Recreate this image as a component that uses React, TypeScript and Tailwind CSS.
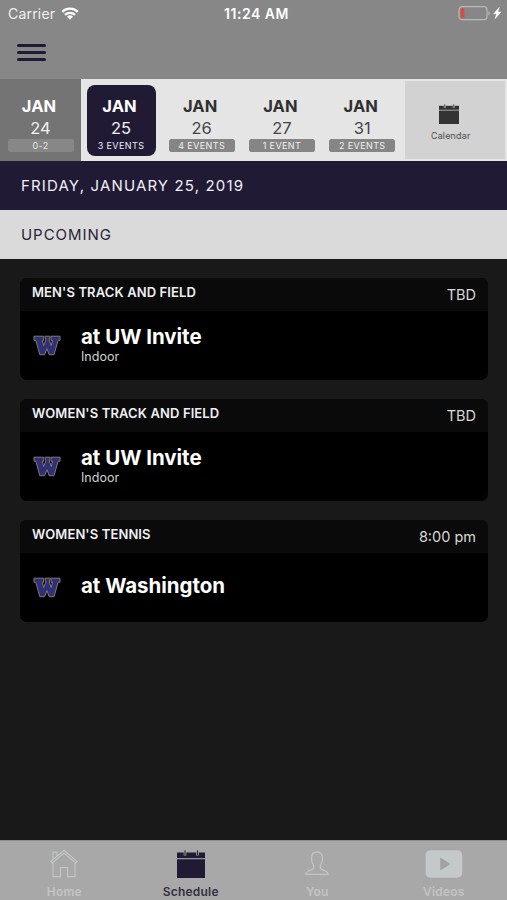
import React from 'react';

type Day = { month: string; day: string; label: string; state: 'past' | 'active' | 'next' };

const days: Day[] = [
  { month: 'JAN', day: '24', label: '0-2', state: 'past' },
  { month: 'JAN', day: '25', label: '3 EVENTS', state: 'active' },
  { month: 'JAN', day: '26', label: '4 EVENTS', state: 'next' },
  { month: 'JAN', day: '27', label: '1 EVENT', state: 'next' },
  { month: 'JAN', day: '31', label: '2 EVENTS', state: 'next' },
];

const events = [
  { sport: "MEN'S TRACK AND FIELD", time: 'TBD', title: 'at UW Invite', note: 'Indoor' },
  { sport: "WOMEN'S TRACK AND FIELD", time: 'TBD', title: 'at UW Invite', note: 'Indoor' },
  { sport: "WOMEN'S TENNIS", time: '8:00 pm', title: 'at Washington', note: '' },
];

function StatusBar() {
  return (
    <div className="grid h-7 grid-cols-3 items-center pl-2 pr-[5px] text-white">
      <div className="flex items-center gap-[6px]">
        <span className="text-[14px] leading-7 tracking-[0.2px] text-[#f0f0f0]">Carrier</span>
        <svg width="18" height="13" viewBox="0 0 18 13" fill="none" stroke="#fff" strokeWidth="2.3" className="-mt-0.5">
          <path d="M1.2 4.8a11.2 11.2 0 0 1 15.6 0" />
          <path d="M4 7.9a7.2 7.2 0 0 1 10 0" />
          <path d="M9 12.8 6 9.8a4.3 4.3 0 0 1 6 0z" fill="#fff" stroke="none" />
        </svg>
      </div>
      <span className="pl-[3px] text-center text-[14px] font-semibold leading-7 tracking-[0.5px]">11:24 AM</span>
      <svg width="44" height="16" viewBox="0 0 44 16" className="-mt-0.5 justify-self-end">
        <rect x="1" y="1.7" width="28" height="13" rx="3" fill="none" stroke="#b9b9b9" strokeWidth="1.2" />
        <path d="M30.4 6.2c1.8.6 1.8 3.6 0 4.2z" fill="#b9b9b9" />
        <rect x="2.7" y="3.5" width="3.7" height="9.5" rx="1" fill="#dc4a3d" />
        <path d="m41.3 2.3-5.700 6.500h3l-1.500 5 5.900-6.900h-3.100z" fill="#fff" stroke="#fff" strokeWidth="0.4" />
      </svg>
    </div>
  );
}

function DayCell({ item }: { item: Day }) {
  const past = item.state === 'past';
  const active = item.state === 'active';
  const cell = past ? 'w-[81px] bg-[#747474] text-white' : active ? 'w-[80.5px] pr-[0.5px] text-white' : 'w-[80.3px] text-[#303030]';
  const badge = past ? 'bg-[#878787] text-[#e5e5e5]' : active ? 'text-[#eeeef5]' : 'bg-[#858585] text-[#f0f0f0]';
  return (
    <div className={`flex shrink-0 justify-center pt-[6px] ${cell}`}>
      <div className={`flex h-[71px] w-[69px] flex-col items-center rounded-[8px] pt-[11px] ${active ? 'bg-[#211a35]' : ''}`}>
        <span className="h-[21px] pr-[3px] text-[16.5px] font-bold leading-[21px] tracking-[0.1px]">{item.month}</span>
        <span className={`h-[22px] text-[16.5px] leading-[22px] ${item.state === 'next' ? 'text-[#444]' : 'text-[#f0f0f0]'}`}>{item.day}</span>
        <span className={`h-[13px] w-[66px] rounded-[2.5px] text-center text-[9px] leading-[13px] tracking-[0.4px] ${badge}`}>{item.label}</span>
      </div>
    </div>
  );
}

function CalendarIcon({ className, line }: { className: string; line: string }) {
  return (
    <svg viewBox="0 0 28 28" className={className} preserveAspectRatio="none">
      <path d="M0 2.5h28V28H0z" fill="currentColor" />
      <path d="M0 8.7h28" stroke={line} strokeWidth="1.1" />
      <path d="M8 0v5.6M20.5 0v5.6" stroke={line} strokeWidth="2.6" />
      <path d="M8 .4v4.8M20.5 .4v4.8" stroke="currentColor" strokeWidth="1" />
    </svg>
  );
}

function TeamLogo() {
  return (
    <svg width="28" height="21" viewBox="0 0 28 21">
      <path
        d="M1 1.200h9.600v4.100H9.300l1.300 5.300L12.800 5l-.9-3.800h5.300L16.300 5l1.900 5.600 1.400-5.300h-1.500V1.200H27v4.100h-1.900L21 19.700h-4.800L14 13.600l-2.400 6.100H6.800L2.800 5.300H1z"
        fill="#303078"
        stroke="#85796a"
        strokeWidth="1"
      />
    </svg>
  );
}

function EventCard({ item }: { item: (typeof events)[number] }) {
  return (
    <article className="h-[102px] overflow-hidden rounded-[7px] bg-black text-white">
      <header className="flex h-[33px] justify-between bg-[#0a0a0a] pl-3 pr-3">
        <h2 className="text-[13px] font-semibold leading-[29px] tracking-[0.12px] text-[#f0f0f4]">{item.sport}</h2>
        <span className="text-[14.5px] leading-[34px] text-[#d8d8d8]">{item.time}</span>
      </header>
      <div className="flex h-[69px] items-center pl-[13px]">
        <TeamLogo />
        <div className={`flex flex-col pl-5 ${item.note ? 'pb-px' : 'pb-[3px]'}`}>
          <span className="text-[20.5px] font-bold leading-6 tracking-[-0.03px]">{item.title}</span>
          {item.note && <span className="text-[12.5px] leading-4 text-[#d0d0d0]">{item.note}</span>}
        </div>
      </div>
    </article>
  );
}

function Tab({ label, active, children }: { label: string; active?: boolean; children: React.ReactNode }) {
  return (
    <div className={`flex flex-1 flex-col items-center pt-[8px] ${active ? 'text-[#211a35]' : 'text-[#c1c5c6]'}`}>
      <div className="flex h-[30px] items-center justify-center">{children}</div>
      <span className={`mt-1 text-[12px] font-semibold leading-[17px] tracking-[0.2px] ${active ? 'text-[#342f42]' : ''}`}>{label}</span>
    </div>
  );
}

export default function App() {
  return (
    <div className="flex h-[900px] w-[507px] flex-col overflow-hidden bg-[#191919] font-['Inter',sans-serif]">
      <header className="h-[79px] shrink-0 bg-[#878787]">
        <StatusBar />
        <div className="ml-[17px] mt-4 flex w-[29px] flex-col gap-[4px]">
          <i className="h-[3px] rounded bg-[#211a35]" />
          <i className="h-[3px] rounded bg-[#211a35]" />
          <i className="h-[3px] rounded bg-[#211a35]" />
        </div>
      </header>
      <nav className="flex h-[82px] shrink-0 bg-[#e5e5e5]">
        {days.map((d) => (
          <DayCell key={d.day} item={d} />
        ))}
        <div className="ml-[3px] mr-[2px] mt-[2px] flex h-[78px] flex-1 flex-col items-center bg-[#d2d2d2] pr-[9px] pt-[23px]">
          <CalendarIcon className="mr-[3px] h-[20px] w-[20px] text-[#333]" line="#c4c4c4" />
          <span className="mt-[4px] text-[9px] leading-4 tracking-[0.15px] text-[#4a4a4a]">Calendar</span>
        </div>
      </nav>
      <div className="h-[49px] shrink-0 bg-[#211a35] pl-[21px] text-[15px] leading-[50px] tracking-[1.15px] text-[#f0f0f8]">
        FRIDAY, JANUARY 25, 2019
      </div>
      <div className="h-[49px] shrink-0 bg-[#dadada] pl-[21px] text-[15px] leading-[49px] tracking-[0.95px] text-[#282438]">
        UPCOMING
      </div>
      <main className="flex flex-1 flex-col gap-[19px] pl-5 pr-[19px] pt-[19px]">
        {events.map((e) => (
          <EventCard key={e.sport} item={e} />
        ))}
      </main>
      <nav className="flex h-[60px] shrink-0 border-t border-[#8e8e8e] bg-[#a8a8a8] pl-px">
        <Tab label="Home">
          <svg width="28" height="29" viewBox="0 0 28 29" fill="none" stroke="currentColor" strokeWidth="1.2" className="mb-px">
            <path d="M1 12.5 14 1.2l13 11.3-1.3 1.4L14 4 2.3 13.9z" />
            <path d="M3 10.5V3.2h4v4M3 13.700v14h7.500v-9.200h7v9.200H25v-14" />
          </svg>
        </Tab>
        <Tab label="Schedule" active>
          <CalendarIcon className="h-[28px] w-[28px]" line="#a8a8a8" />
        </Tab>
        <Tab label="You">
          <svg width="24" height="26" viewBox="0 0 24 26" fill="none" stroke="currentColor" strokeWidth="1.300" className="mb-[3px]">
            <path d="M1 24.300h22c0-2.600-2.200-3.600-5.200-4.500-2.500-.8-3.100-2.400-2.400-4.700 1.500-1.700 2.100-4.200 2.100-6.900C17.500 4.200 15.500 2 12 2S6.500 4.200 6.500 8.200c0 2.700.6 5.200 2.100 6.900.7 2.300.1 3.900-2.400 4.700C3.200 20.700 1 21.700 1 24.300z" />
          </svg>
        </Tab>
        <Tab label="Videos">
          <svg width="38" height="28" viewBox="0 0 38 28">
            <rect x=".6" y=".3" width="36.600" height="27.400" rx="5" fill="#c4c8c9" />
            <path d="M15.200 7.500v13L25.500 14z" fill="#a0a3a4" />
          </svg>
        </Tab>
      </nav>
    </div>
  );
}
